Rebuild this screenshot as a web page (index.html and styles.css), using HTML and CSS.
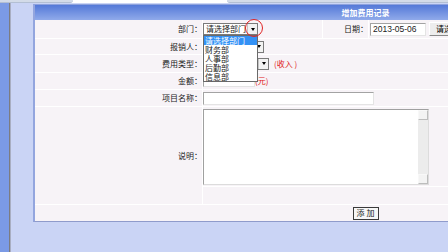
FILE: index.html
```html
<!DOCTYPE html>
<html lang="zh-CN">
<head>
    <meta charset="UTF-8">
    <title>增加费用记录</title>
    <link rel="stylesheet" href="styles.css">
</head>
<body class="page">
    <div class="topbar">
        <div class="topbar-left"></div>
        <div class="topbar-right"></div>
    </div>
    <div class="main">
        <div class="side-blue"></div>
        <div class="side-line"></div>
        <div class="content">
            <div class="panel">
                <div class="panel-head">增加费用记录</div>
                <div class="form-grid">
                    <div class="cell label">部门：</div>
                    <div class="cell value">
                        <div class="select sel-dept">
                            <span class="select-text">请选择部门</span>
                            <span class="select-btn"><span class="arrow"></span></span>
                            <div class="dropdown">
                                <div class="option active">请选择部门</div>
                                <div class="option">财务部</div>
                                <div class="option">人事部</div>
                                <div class="option">后勤部</div>
                                <div class="option">信息部</div>
                            </div>
                            <div class="ring"></div>
                        </div>
                    </div>
                    <div class="cell label">日期：</div>
                    <div class="cell value date-cell">
                        <input class="input date-input" type="text" value="2013-05-06">
                        <button class="pick-btn">请选择</button>
                    </div>

                    <div class="cell label">报销人：</div>
                    <div class="cell value wide">
                        <div class="select sel-person">
                            <span class="select-text"></span>
                            <span class="select-btn"><span class="arrow"></span></span>
                        </div>
                    </div>

                    <div class="cell label">费用类型：</div>
                    <div class="cell value wide">
                        <div class="select sel-type">
                            <span class="select-text"></span>
                            <span class="select-btn"><span class="arrow"></span></span>
                        </div>
                        <span class="note note-type">(收入 )</span>
                    </div>

                    <div class="cell label">金额：</div>
                    <div class="cell value wide">
                        <input class="input money-input" type="text">
                        <span class="note">(元)</span>
                    </div>

                    <div class="cell label">项目名称：</div>
                    <div class="cell value wide">
                        <input class="input name-input" type="text">
                    </div>

                    <div class="cell label memo-label">说明：</div>
                    <div class="cell value wide memo-cell">
                        <div class="memo">
                            <div class="memo-scroll">
                                <div class="scroll-btn"></div>
                                <div class="scroll-btn"></div>
                            </div>
                        </div>
                    </div>
                    <div class="cell value wide"></div>

                    <div class="cell submit-row">
                        <button class="btn-add">添 加</button>
                    </div>
                </div>
            </div>
        </div>
    </div>
</body>
</html>
```

FILE: styles.css
```css
* {
    box-sizing: border-box;
}

.page {
    margin: 0;
    width: 448px;
    height: 252px;
    overflow: hidden;
    background-color: #ffffff;
    font-family: "Noto Sans CJK SC", "Liberation Sans", sans-serif;
    font-size: 8px;
    color: #1a1a1a;
}

.topbar {
    height: 3px;
    display: flex;
    justify-content: space-between;
}

.topbar-left,
.topbar-right {
    height: 3px;
    background-color: #d3dbe8;
    border-bottom: 1px solid #b3bfd3;
}

.topbar-left {
    width: 73px;
    border-radius: 0 0 3px 0;
}

.topbar-right {
    width: 221px;
    border-radius: 0 0 0 3px;
}

.main {
    display: flex;
    height: 249px;
}

.side-blue {
    width: 9px;
    background-color: #7b9ae5;
}

.side-line {
    width: 2px;
    background-color: #7c7c80;
    border-right: 1px solid #a9aec2;
}

.content {
    flex: 1;
    min-width: 0;
    overflow: hidden;
    padding: 1px 0 0 22px;
    background-color: #cad4f5;
}

.panel {
    width: 663px;
    border-left: 2px solid #93a5de;
    border-top: 1px solid #8ea2dc;
    border-bottom: 1px solid #8f9bcb;
    background-color: #f7f3f7;
}

.panel-head {
    height: 15px;
    line-height: 15px;
    text-align: center;
    font-weight: bold;
    color: #ffffff;
    background: linear-gradient(#5479d8, #90aaea);
}

.form-grid {
    display: grid;
    grid-template-columns: 167px 119px 45px 1fr;
    grid-template-rows: 18px 15px 17px 16px 16px 79px 17px 16px;
    gap: 1px;
    background-color: #ffffff;
}

.cell {
    display: flex;
    align-items: center;
    line-height: 10px;
    background-color: #f7f3f7;
}

.label {
    justify-content: flex-end;
    white-space: nowrap;
}

.wide {
    grid-column: span 3;
}

.memo-label {
    grid-row: span 2;
}

.date-cell {
    padding-left: 1px;
    overflow: hidden;
}

/* drop-down boxes */
.select {
    position: relative;
    display: flex;
    height: 12px;
    border: 1px solid #7a7a7a;
    background-color: #ffffff;
}

.sel-dept {
    width: 55px;
}

.sel-person {
    width: 61px;
}

.sel-type {
    width: 66px;
}

.select-text {
    padding-left: 2px;
    white-space: nowrap;
    overflow: hidden;
}

.select-btn {
    width: 10px;
    margin-left: auto;
    flex-shrink: 0;
    display: flex;
    align-items: center;
    justify-content: center;
    background-color: #f2f2f2;
    border-left: 1px solid #c4c4c4;
}

.arrow {
    width: 0;
    height: 0;
    border-top: 3px solid #000000;
    border-left: 2.5px solid transparent;
    border-right: 2.5px solid transparent;
}

.dropdown {
    position: absolute;
    top: 11px;
    left: -1px;
    width: 55px;
    border: 1px solid #6a6a6a;
    background-color: #ffffff;
    z-index: 2;
}

.option {
    height: 9px;
    line-height: 9px;
    padding-left: 1px;
    white-space: nowrap;
}

.option.active {
    background-color: #3391f5;
    color: #ffffff;
}

.ring {
    position: absolute;
    left: 41px;
    top: -5px;
    width: 18px;
    height: 18px;
    border: 1.5px solid #e02424;
    border-radius: 50%;
    z-index: 3;
}

.note {
    color: #e02020;
    white-space: nowrap;
}

.note-type {
    margin-left: 5px;
}

/* text inputs */
.input {
    height: 13px;
    padding: 0 0 0 2px;
    border: 1px solid;
    border-color: #a3a3a3 #e4e4e4 #e4e4e4 #a3a3a3;
    background-color: #ffffff;
    font-family: "Liberation Sans", sans-serif;
    font-size: 8.5px;
    color: #222222;
    outline: none;
}

.date-input {
    width: 56px;
    flex-shrink: 0;
}

.money-input {
    width: 52px;
    height: 12px;
}

.name-input {
    width: 171px;
}

.pick-btn {
    margin-left: 3px;
    height: 14px;
    padding: 0 6px;
    flex-shrink: 0;
    border: 1px solid;
    border-color: #ffffff #8a8a8a #8a8a8a #ffffff;
    background-color: #ededed;
    font-family: "Noto Sans CJK SC", sans-serif;
    font-size: 8px;
    line-height: 10px;
    white-space: nowrap;
}

.memo-cell {
    align-items: flex-start;
}

.memo {
    margin-top: 2px;
    width: 226px;
    height: 76px;
    display: flex;
    justify-content: flex-end;
    border: 1px solid;
    border-color: #a0a0a0 #dcdcdc #dcdcdc #a0a0a0;
    background-color: #ffffff;
}

.memo-scroll {
    width: 10px;
    display: flex;
    flex-direction: column;
    justify-content: space-between;
    background-color: #ececec;
}

.scroll-btn {
    height: 10px;
    border: 1px solid;
    border-color: #f8f8f8 #bdbdbd #bdbdbd #f8f8f8;
    background-color: #f3f3f3;
}

.submit-row {
    grid-column: 1 / -1;
    justify-content: center;
}

.btn-add {
    width: 26px;
    height: 13px;
    padding: 0;
    border: 1px solid #3a3a3a;
    background-color: #f6f6f6;
    font-family: "Noto Sans CJK SC", sans-serif;
    font-size: 8px;
    line-height: 10px;
    color: #1a1a1a;
}
```
